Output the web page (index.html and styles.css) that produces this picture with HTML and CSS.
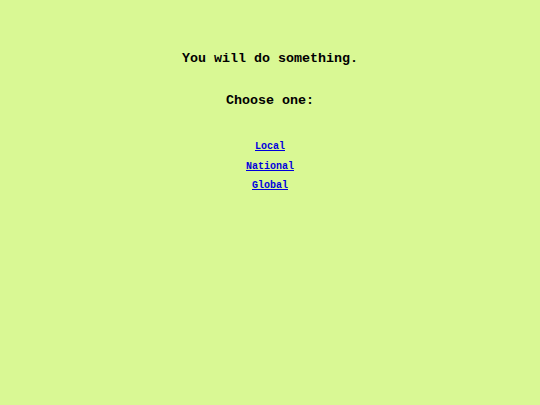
FILE: index.html
```html
<!DOCTYPE html>
<html>
<head>
<meta charset="utf-8">
<link rel="stylesheet" href="styles.css">
</head>
<body>
<div class="page">
  <h1 class="title">You will do something.</h1>
  <h2 class="prompt">Choose one:</h2>
  <ul class="choices">
    <li><a href="#">Local</a></li>
    <li><a href="#">National</a></li>
    <li><a href="#">Global</a></li>
  </ul>
</div>
</body>
</html>
```
FILE: styles.css
```css
html, body {
  margin: 0;
  padding: 0;
  background: #d9f894;
}
body {
  font-family: "Liberation Mono", "DejaVu Sans Mono", monospace;
  color: #000;
}
.page {
  display: flex;
  flex-direction: column;
  align-items: center;
  padding-top: 50px;
}
.title {
  margin: 0;
  font-size: 13.33px;
  font-weight: bold;
  line-height: 18px;
}
.prompt {
  margin: 24px 0 0;
  font-size: 13.33px;
  font-weight: bold;
  line-height: 18px;
}
.choices {
  list-style: none;
  margin: 30px 0 0;
  padding: 0;
  display: flex;
  flex-direction: column;
  align-items: center;
  gap: 6.5px;
}
.choices li {
  font-size: 10px;
  font-weight: bold;
  line-height: 13px;
}
.choices a {
  color: #0000dd;
  text-decoration: underline;
}
```
